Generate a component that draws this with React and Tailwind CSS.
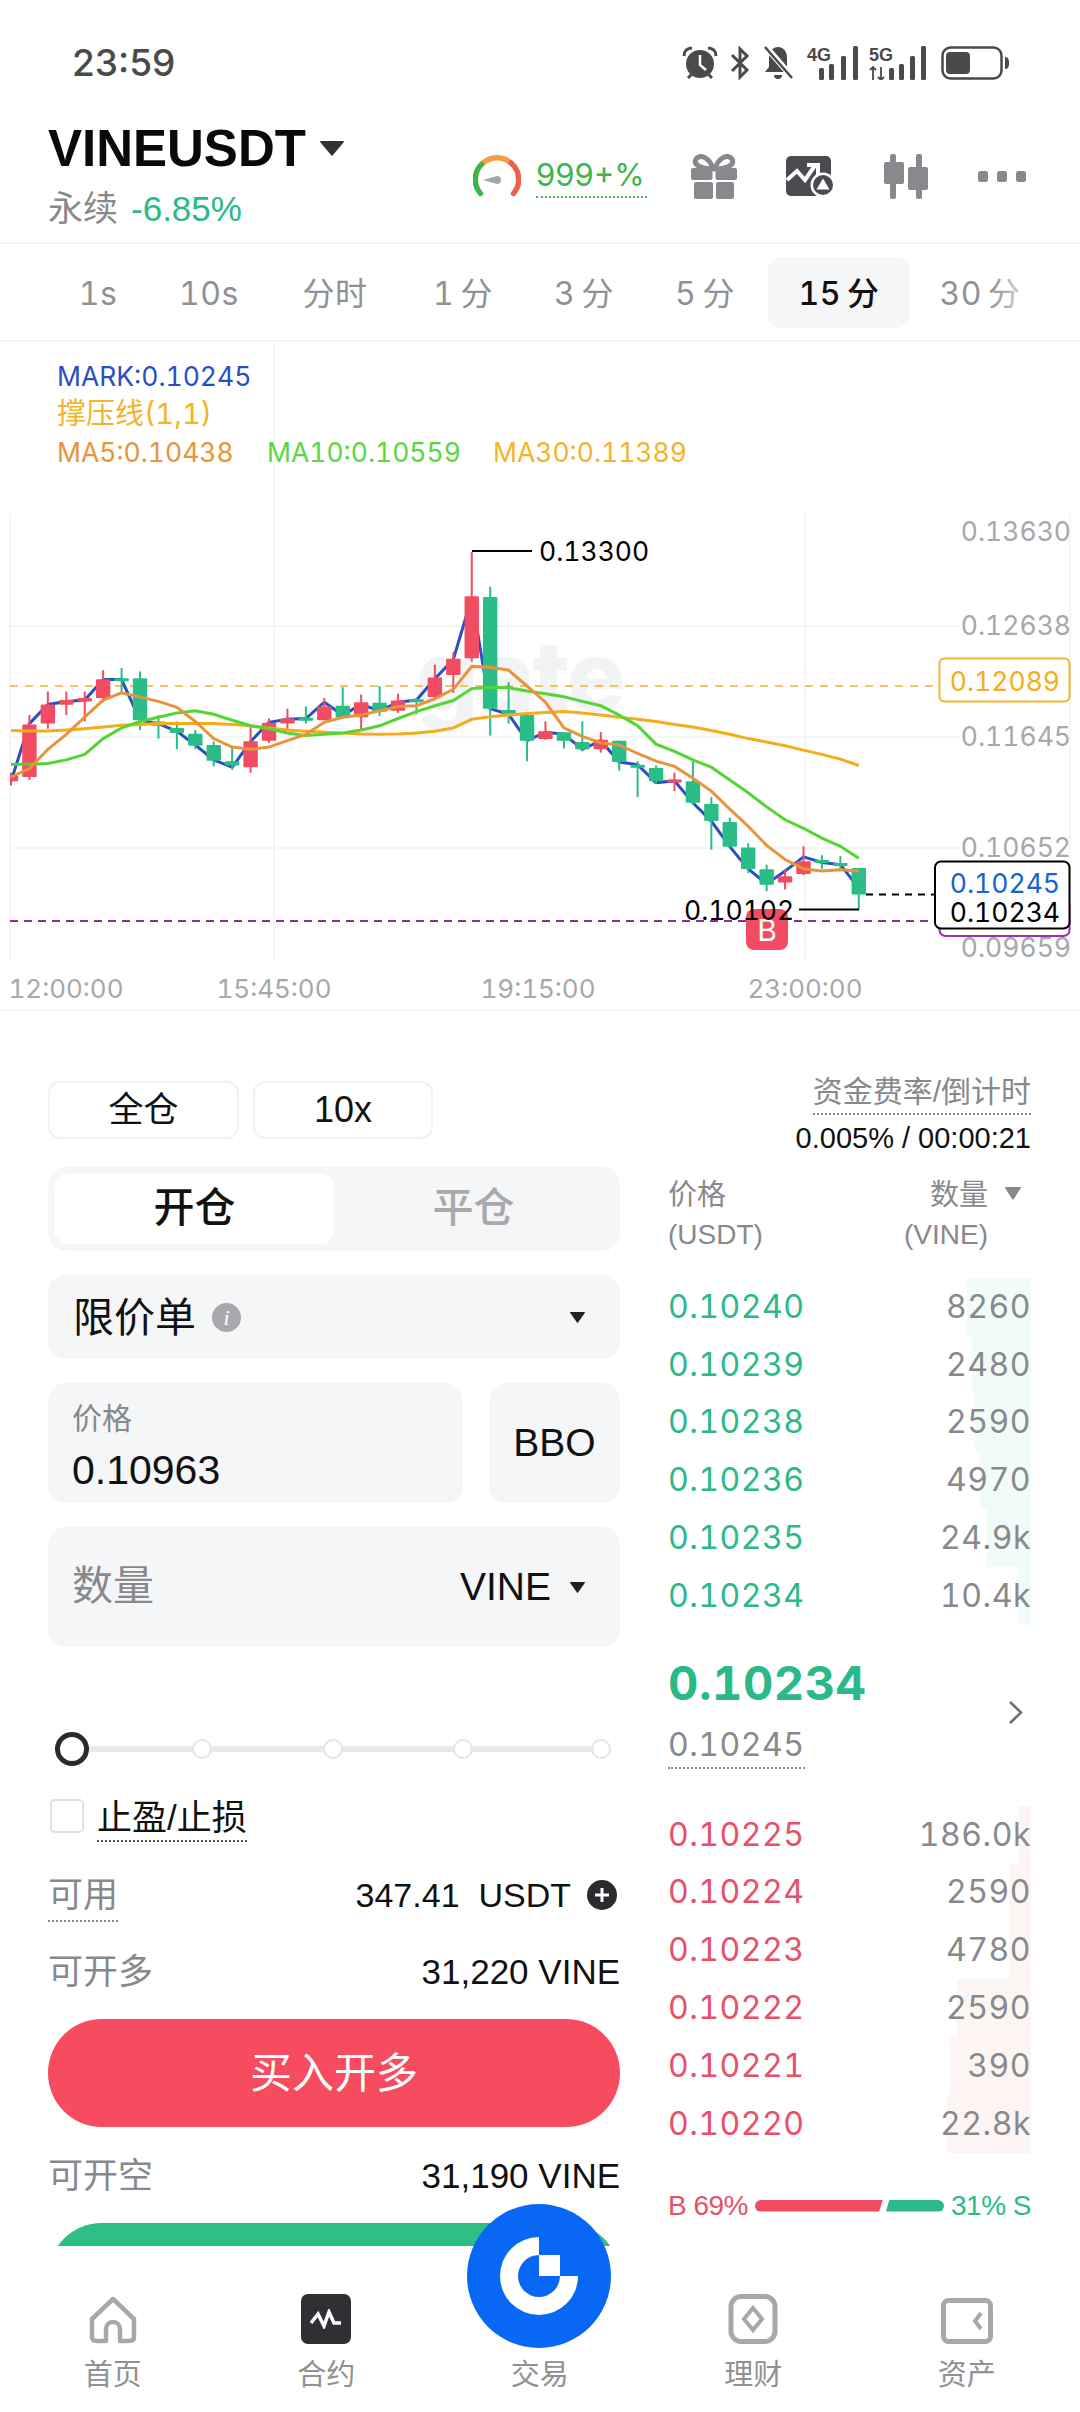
import React from "react";

// candle data in chart px-ish units: [wickTop, wickBottom, bodyTop, bodyBottom, up]
const candles = [
    [1015, 1045, 1022, 1035, 1], [880, 1032, 902, 1025, 1], [825, 912, 855, 900, 1], [825, 880, 845, 856, 1],
    [825, 895, 840, 848, 1], [775, 850, 796, 840, 1], [770, 830, 794, 800, 0], [778, 915, 794, 892, 0],
    [880, 935, 895, 905, 0], [895, 960, 910, 922, 0], [915, 960, 924, 952, 0], [942, 1000, 950, 987, 0],
    [955, 1008, 988, 998, 0], [908, 1015, 941, 1002, 1], [888, 945, 898, 940, 1], [865, 915, 888, 900, 1],
    [860, 900, 886, 890, 0], [840, 892, 860, 892, 1], [815, 888, 858, 885, 0], [832, 915, 850, 885, 1],
    [812, 882, 851, 872, 0], [830, 875, 846, 870, 1], [840, 878, 843, 846, 0], [762, 845, 792, 838, 1],
    [732, 828, 748, 786, 1], [498, 755, 602, 747, 1], [580, 928, 604, 865, 0], [803, 900, 868, 882, 0],
    [875, 988, 880, 940, 0], [895, 938, 918, 936, 1], [920, 958, 920, 940, 0], [895, 965, 943, 960, 0],
    [920, 968, 938, 960, 1], [940, 1010, 940, 990, 0], [988, 1072, 996, 1000, 0], [998, 1040, 1004, 1035, 0],
    [1015, 1058, 1031, 1036, 1], [988, 1090, 1035, 1085, 0], [1072, 1195, 1088, 1128, 0], [1120, 1190, 1130, 1188, 0],
    [1180, 1250, 1190, 1240, 0], [1230, 1292, 1241, 1277, 0], [1240, 1288, 1257, 1272, 1], [1187, 1255, 1222, 1252, 1],
    [1208, 1240, 1219, 1225, 0], [1210, 1240, 1226, 1230, 0], [1238, 1335, 1238, 1300, 0],
];

const markLine = [1035, 900, 855, 848, 845, 797, 797, 892, 900, 918, 950, 985, 1002, 942, 897, 890, 888, 850, 880, 855, 870, 850, 845, 795, 750, 605, 865, 878, 940, 920, 925, 960, 940, 990, 996, 1038, 1034, 1085, 1128, 1188, 1240, 1275, 1245, 1212, 1225, 1230, 1285];
const ma5Line = [1025, 1005, 960, 925, 885, 845, 828, 838, 848, 862, 895, 935, 955, 960, 955, 940, 925, 897, 885, 880, 870, 860, 858, 842, 820, 766, 768, 775, 812, 850, 910, 930, 945, 950, 970, 988, 1000, 1028, 1058, 1100, 1140, 1185, 1218, 1240, 1245, 1242, 1245];
const ma10Line = [995, 995, 993, 985, 972, 935, 910, 895, 885, 875, 870, 878, 892, 905, 912, 922, 928, 925, 922, 915, 905, 888, 872, 858, 846, 818, 815, 816, 824, 830, 837, 848, 858, 880, 905, 948, 965, 985, 1002, 1032, 1062, 1095, 1125, 1145, 1168, 1187, 1215];
const ma30Line = [916, 917, 917, 915, 912, 908, 904, 902, 900, 900, 900, 900, 902, 905, 910, 915, 918, 920, 922, 924, 925, 924, 922, 918, 910, 890, 884, 880, 876, 874, 872, 875, 880, 885, 890, 895, 902, 908, 916, 925, 935, 943, 952, 962, 972, 983, 998];

const candleX = (i) => 11 + 18.43 * i;
const toY = (v) => v / 2.34;
const linePoints = (vals) => vals.map((v, i) => `${candleX(i).toFixed(1)},${toY(v).toFixed(1)}`).join(" ");

const bids = [
    ["0.10240", "8260", 64], ["0.10239", "2480", 59], ["0.10238", "2590", 56],
    ["0.10236", "4970", 51], ["0.10235", "24.9k", 44], ["0.10234", "10.4k", 13],
];
const asks = [
    ["0.10225", "186.0k", 12], ["0.10224", "2590", 22], ["0.10223", "4780", 22],
    ["0.10222", "2590", 74], ["0.10221", "390", 81], ["0.10220", "22.8k", 84],
];

const periods = [
    ["1s", "w-[100px]"], ["10s", "w-[122px]"], ["分时", "w-[130px]"], ["1 分", "w-[126px]"],
    ["3 分", "w-[116px]"], ["5 分", "w-[126px]"],
];

const Tri = ({ w = 15, h = 11, className = "" }) => (
    <svg width={w} height={h} viewBox="0 0 15 11" preserveAspectRatio="none" className={className}>
        <path d="M0.5 0H14.5C15 0 15 0.5 14.8 1L8 10.5C7.7 11 7.3 11 7 10.5L0.2 1C0 0.5 0 0 0.5 0Z" fill="currentColor" />
    </svg>
);

const StatusIcons = () => (
    <div className="flex items-center text-[#4a4a4a]">
        <svg width="36" height="34" viewBox="0 0 36 34">
            <circle cx="18" cy="18" r="14" fill="currentColor" />
            <path d="M2 10C2 5 5 2 10 2M34 10C34 5 31 2 26 2M6 32l4-4M30 32l-4-4" stroke="currentColor" strokeWidth="3" fill="none" />
            <path d="M18 9v10l6 5" stroke="#fff" strokeWidth="2.5" fill="none" />
        </svg>
        <svg width="22" height="34" viewBox="0 0 22 34" className="ml-[11px]">
            <path d="M3 9L18 24L11 31V3L18 10L3 25" stroke="currentColor" strokeWidth="3" fill="none" />
        </svg>
        <svg width="34" height="36" viewBox="0 0 34 36" className="ml-[10px]">
            <path d="M17 2C11 2 8 7 8 13v9l-4 5h26l-4-5v-9C26 7 23 2 17 2Z" fill="currentColor" />
            <path d="M13 30a4 4 0 0 0 8 0Z" fill="currentColor" />
            <path d="M5 2L32 33" stroke="#fff" strokeWidth="6" />
            <path d="M4 2L31 33" stroke="currentColor" strokeWidth="2.5" />
        </svg>
        <svg width="53" height="34" viewBox="0 0 53 34" className="ml-[12px]">
            <text x="0" y="15" fontSize="18" fontWeight="700" fill="currentColor">4G</text>
            <rect x="12" y="22" width="5" height="12" rx="1.5" fill="currentColor" />
            <rect x="22" y="18" width="5" height="16" rx="1.5" fill="currentColor" />
            <rect x="34" y="10" width="5" height="24" rx="1.5" fill="currentColor" />
            <rect x="46" y="0" width="5" height="34" rx="1.5" fill="currentColor" />
        </svg>
        <svg width="59" height="34" viewBox="0 0 59 34" className="ml-[9px]">
            <text x="0" y="15" fontSize="18" fontWeight="700" fill="currentColor">5G</text>
            <path d="M4 34V21M1 24l3-3 3 3M12 21v13M9 31l3 3 3-3" stroke="currentColor" strokeWidth="1.8" fill="none" />
            <rect x="20" y="22" width="5" height="12" rx="1.5" fill="currentColor" />
            <rect x="30" y="18" width="5" height="16" rx="1.5" fill="currentColor" />
            <rect x="41" y="10" width="5" height="24" rx="1.5" fill="currentColor" />
            <rect x="52" y="0" width="5" height="34" rx="1.5" fill="currentColor" />
        </svg>
        <svg width="68" height="34" viewBox="0 0 68 34" className="ml-[13px]">
            <rect x="1.5" y="1.5" width="59" height="31" rx="8" stroke="currentColor" strokeWidth="2.5" fill="none" />
            <rect x="5" y="6" width="24" height="22" rx="4" fill="currentColor" />
            <path d="M64 11c3 0 4 2 4 6s-1 6-4 6Z" fill="currentColor" />
        </svg>
    </div>
);

const Gauge = () => (
    <svg width="48" height="42" viewBox="0 0 48 42">
        <path d="M7.5 38.5A21.5 21.5 0 0 1 10 8" stroke="#3db54a" strokeWidth="5.5" strokeLinecap="round" fill="none" />
        <path d="M10 8A21.5 21.5 0 0 1 38 8" stroke="#f59d45" strokeWidth="5.5" fill="none" />
        <path d="M38 8A21.5 21.5 0 0 1 40.5 38.5" stroke="#ee5f50" strokeWidth="5.5" strokeLinecap="round" fill="none" />
        <path d="M10 25L24 21a4 4 0 0 1 0 8Z" fill="#a3a5a8" />
    </svg>
);

const GiftIcon = () => (
    <svg width="46" height="45" viewBox="0 0 46 45" fill="#87898c">
        <path d="M22 15C19 4 9-1 5 5c-3 6 5 10 17 10ZM24 15C27 4 37-1 41 5c3 6-5 10-17 10Z" fill="none" stroke="#87898c" strokeWidth="5" />
        <rect x="0" y="14" width="21.5" height="12" rx="2" />
        <rect x="24.5" y="14" width="21.5" height="12" rx="2" />
        <rect x="3" y="28" width="19" height="17" rx="2" />
        <rect x="25" y="28" width="18" height="17" rx="2" />
    </svg>
);

const AlertIcon = () => (
    <svg width="49" height="41" viewBox="0 0 49 41">
        <rect x="0" y="0" width="45" height="40" rx="5" fill="#4a4b50" />
        <path d="M1 24L11 15L19 24L30 8" stroke="#fff" strokeWidth="4" fill="none" />
        <path d="M21 9H32V20" stroke="#fff" strokeWidth="4" fill="none" />
        <circle cx="37" cy="29" r="12.5" fill="#fff" />
        <circle cx="37" cy="29" r="10" fill="#4a4b50" />
        <path d="M37 22.5L43.5 33.5H30.5Z" fill="#fff" />
    </svg>
);

const CandleIcon = () => (
    <svg width="46" height="45" viewBox="0 0 46 45" fill="#87898c">
        <rect x="7" y="0" width="6" height="45" rx="2" />
        <rect x="1" y="8" width="20" height="22" rx="2" />
        <rect x="33" y="0" width="6" height="45" rx="2" />
        <rect x="25" y="13" width="20" height="23" rx="2" />
    </svg>
);

const DotsIcon = () => (
    <svg width="48" height="11" viewBox="0 0 48 11" fill="#87898c">
        <rect x="0" width="10" height="11" rx="2.5" />
        <rect x="19" width="10" height="11" rx="2.5" />
        <rect x="38" width="10" height="11" rx="2.5" />
    </svg>
);

const Chart = () => (
    <div className="relative h-[669px] border-b-2 border-[#f4f5f6] font-[Inter,'Noto_Sans_CJK_SC',sans-serif] tabular-nums">
        <svg width="1080" height="667" viewBox="0 0 1080 667" className="absolute left-0 top-[-3px]">
            <defs>
                <clipPath id="plot"><rect x="10" y="0" width="1000" height="640" /></clipPath>
            </defs>
            {/* grid */}
            <path d="M10 175V620M274 4V620M805 175V620M1070 175V620" stroke="#f4f4f5" strokeWidth="1.5" />
            <path d="M10 287H960M10 398H960M10 509H960" stroke="#f4f4f5" strokeWidth="1.5" />
            <text x="416" y="372" fontSize="98" fontWeight="800" letterSpacing="-2" fill="#f2f3f4">gate</text>
            <path d="M10 347H938" stroke="#f5b32b" strokeWidth="1.5" strokeDasharray="8 7" />
            <path d="M10 582H934" stroke="#8e2aa6" strokeWidth="2" strokeDasharray="8 6" />

            <g clipPath="url(#plot)">
                <polyline points={linePoints(markLine)} fill="none" stroke="#2a4fc0" strokeWidth="3" />
                {candles.map(([wt, wb, bt, bb, up], i) => {
                    const color = up ? "#f24c62" : "#2bbd87";
                    const x = candleX(i);
                    return (
                        <g key={i}>
                            <rect x={x - 1} y={toY(wt)} width="2" height={toY(wb) - toY(wt)} fill={color} />
                            <rect x={x - 7.2} y={toY(bt)} width="14.4" height={Math.max(toY(bb) - toY(bt), 3)} rx="1" fill={color} />
                        </g>
                    );
                })}
                <polyline points={linePoints(ma30Line)} fill="none" stroke="#f5ac1b" strokeWidth="3" />
                <polyline points={linePoints(ma10Line)} fill="none" stroke="#55d535" strokeWidth="3" />
                <polyline points={linePoints(ma5Line)} fill="none" stroke="#e8943a" strokeWidth="3" />
            </g>

            {/* high / low marks */}
            <path d="M472 212H532" stroke="#000" strokeWidth="2" />
            <text x="539" y="222" fontSize="26.5" fill="#000">0.13300</text>
            <rect x="746" y="570" width="42" height="41" rx="8" fill="#f24c62" />
            <text x="767" y="602" fontSize="30" fill="#fff" textAnchor="middle">B</text>
            <text x="684" y="581" fontSize="26.5" fill="#000">0.10102</text>
            <path d="M799 570.5H859" stroke="#000" strokeWidth="2" />
            <path d="M866 555.5H934" stroke="#000" strokeWidth="2" strokeDasharray="7 6" />

            {/* price axis */}
            <g fontSize="26.5" fill="#a7a8aa" textAnchor="end">
                <text x="1071" y="202">0.13630</text>
                <text x="1071" y="296">0.12638</text>
                <text x="1071" y="407">0.11645</text>
                <text x="1071" y="518">0.10652</text>
                <text x="1071" y="618">0.09659</text>
            </g>
            <rect x="939.5" y="319.5" width="130" height="43" rx="5" fill="#fff" stroke="#f3b32a" strokeWidth="2" />
            <text x="1060" y="352" fontSize="26.5" fill="#f3ae1b" textAnchor="end">0.12089</text>
            <rect x="939.5" y="560" width="130" height="37" rx="6" fill="#fff" stroke="#9c2fb0" strokeWidth="2" />
            <rect x="935" y="522.5" width="134.5" height="67" rx="6" fill="#fff" stroke="#000" strokeWidth="2" />
            <text x="1060" y="554" fontSize="26.5" fill="#1464d2" textAnchor="end">0.10245</text>
            <text x="1060" y="583" fontSize="26.5" fill="#000" textAnchor="end">0.10234</text>

            {/* time axis */}
            <g fontSize="26" fill="#a7a8aa" textAnchor="middle">
                <text x="66" y="659">12:00:00</text>
                <text x="274" y="659">15:45:00</text>
                <text x="538" y="659">19:15:00</text>
                <text x="805" y="659">23:00:00</text>
            </g>
        </svg>
        <div className="relative pl-[57px] pt-[15px] text-[26.5px] leading-[38px]">
            <div className="text-[#2a4fc0]">MARK:0.10245</div>
            <div className="text-[29px] text-[#f3b32a]">撑压线(1,1)</div>
            <div className="flex">
                <span className="w-[210px] text-[#e8943a]">MA5:0.10438</span>
                <span className="w-[226px] text-[#5cd63f]">MA10:0.10559</span>
                <span className="text-[#f5b32b]">MA30:0.11389</span>
            </div>
        </div>
    </div>
);

const BookRow = ({ row, up }) => (
    <div className="relative flex h-[57.8px] items-center justify-between font-[Inter] text-[32px] tracking-[0.5px] tabular-nums">
        <div
            className={up ? "absolute inset-y-0 right-0 bg-[#f1fbf7]" : "absolute inset-y-0 right-0 bg-[#fdf5f4]"}
            style={{ width: row[2] }}
        />
        <span className={up ? "relative text-[#2bb98a]" : "relative text-[#e8506a]"}>{row[0]}</span>
        <span className="relative text-[#87898c]">{row[1]}</span>
    </div>
);

const OrderForm = () => (
    <div className="flex h-[1235px] overflow-hidden">
        <div className="ml-[48px] w-[572px] pt-[70px]">
            <div className="flex gap-[14px] text-[#111]">
                <div className="flex h-[58px] w-[191px] items-center justify-center rounded-[12px] border-2 border-[#f1f2f3] text-[35px]">全仓</div>
                <div className="flex h-[58px] w-[180px] items-center justify-center rounded-[12px] border-2 border-[#f1f2f3] text-[36px]">10x</div>
            </div>
            <div className="mt-[28px] flex h-[84px] rounded-[18px] bg-[#f5f6f7] p-[7px] text-[41px] font-medium">
                <div className="flex w-[279px] items-center justify-center rounded-[14px] bg-white text-[#111]">开仓</div>
                <div className="flex flex-1 items-center justify-center text-[#a7a9ac]">平仓</div>
            </div>
            <div className="mt-[24px] flex h-[84px] items-center rounded-[18px] bg-[#f5f6f7] pl-[25px] pr-[35px] text-[#111]">
                <span className="pt-[3px] text-[41px]">限价单</span>
                <span className="ml-[16px] flex h-[29px] w-[29px] items-center justify-center rounded-full bg-[#a7a9ac] font-['Liberation_Serif'] text-[22px] italic text-white">i</span>
                <Tri className="ml-auto text-[#222]" />
            </div>
            <div className="mt-[24px] flex h-[120px] gap-[26px]">
                <div className="flex flex-1 flex-col rounded-[18px] bg-[#f5f6f7] pl-[24px] pt-[16px]">
                    <span className="text-[30px] leading-[40px] text-[#87898c]">价格</span>
                    <span className="mt-[11px] text-[41px] leading-[40px] text-[#111]">0.10963</span>
                </div>
                <div className="flex w-[131px] items-center justify-center rounded-[18px] bg-[#f5f6f7] text-[39px] text-[#111]">BBO</div>
            </div>
            <div className="mt-[24px] flex h-[120px] items-center rounded-[18px] bg-[#f5f6f7] pl-[24px] pr-[35px]">
                <span className="text-[41px] text-[#87898c]">数量</span>
                <span className="ml-auto text-[39px] text-[#111]">VINE</span>
                <Tri className="ml-[19px] text-[#222]" />
            </div>
            <div className="relative mt-[85px] flex h-[34px] items-center pl-[7px]">
                <div className="absolute inset-x-[24px] h-[6px] rounded-full bg-[#e8e9ea]" />
                <div className="relative h-[34px] w-[34px] rounded-full border-[5px] border-[#2a2b2e] bg-white" />
                <div className="relative ml-[103px] h-[20px] w-[20px] rounded-full border-2 border-[#e4e5e6] bg-white" />
                <div className="relative ml-[111px] h-[20px] w-[20px] rounded-full border-2 border-[#e4e5e6] bg-white" />
                <div className="relative ml-[110px] h-[20px] w-[20px] rounded-full border-2 border-[#e4e5e6] bg-white" />
                <div className="relative ml-[118px] h-[20px] w-[20px] rounded-full border-2 border-[#e4e5e6] bg-white" />
            </div>
            <div className="mt-[33px] flex h-[34px] items-center pl-[2px]">
                <div className="h-[34px] w-[34px] rounded-[5px] border-2 border-[#dfe0e2]" />
                <span className="ml-[13px] mt-[8px] h-[44px] border-b-2 border-dotted border-[#55575a] text-[35px] leading-[40px] text-[#111]">止盈/止损</span>
            </div>
            <div className="mt-[42px] flex h-[40px] items-center justify-between">
                <span className="mt-[7px] h-[47px] border-b-2 border-dotted border-[#87898c] text-[35px] leading-[40px] text-[#87898c]">可用</span>
                <div className="flex items-center text-[34px] text-[#111]">
                    <span className="whitespace-pre">347.41  USDT</span>
                    <span className="ml-[16px] mr-[3px] flex h-[30px] w-[30px] items-center justify-center rounded-full bg-[#2a2b2e]">
                        <svg width="16" height="16" viewBox="0 0 16 16"><path d="M8 1V15M1 8H15" stroke="#fff" strokeWidth="3" /></svg>
                    </span>
                </div>
            </div>
            <div className="mt-[37px] flex h-[40px] items-center justify-between">
                <span className="text-[35px] text-[#87898c]">可开多</span>
                <span className="text-[35px] text-[#111]">31,220 VINE</span>
            </div>
            <div className="mt-[27px] flex h-[108px] items-center justify-center rounded-full bg-[#f74b60] text-[42px] text-white">买入开多</div>
            <div className="mt-[29px] flex h-[40px] items-center justify-between">
                <span className="text-[35px] text-[#87898c]">可开空</span>
                <span className="text-[35px] text-[#111]">31,190 VINE</span>
            </div>
            <div className="mt-[27px] h-[108px] rounded-full bg-[#2ebd85]" />
        </div>

        <div className="relative ml-[48px] w-[363px] pt-[61px]">
            <div className="text-right">
                <span className="inline-block h-[43px] border-b-2 border-dotted border-[#87898c] text-[30px] leading-[40px] text-[#87898c]">资金费率/倒计时</span>
                <div className="mt-[3px] text-[29px] leading-[40px] text-[#111]">0.005% / 00:00:21</div>
            </div>
            <div className="mt-[17px] flex justify-between text-[29px] leading-[40px] text-[#87898c]">
                <div>
                    <div>价格</div>
                    <div className="text-[28px]">(USDT)</div>
                </div>
                <div className="flex flex-col items-end pr-[43px]">
                    <div>数量</div>
                    <div className="text-[28px]">(VINE)</div>
                </div>
                <Tri w={16} h={13} className="absolute right-[10px] mt-[12px] text-[#87898c]" />
            </div>
            <div className="mt-[23px]">
                {bids.map((row) => <BookRow key={row[0]} row={row} up />)}
            </div>
            <div className="mt-[28px] flex items-center justify-between pr-[8px]">
                <div>
                    <div className="font-[Inter] text-[47px] font-bold leading-[60px] tracking-[0.5px] tabular-nums text-[#2bb98a]">0.10234</div>
                    <span className="mt-[12px] inline-block h-[44px] border-b-2 border-dotted border-[#87898c] font-[Inter] text-[32px] leading-[40px] tracking-[0.5px] tabular-nums text-[#87898c]">0.10245</span>
                </div>
                <svg width="15" height="25" viewBox="0 0 15 25" className="mt-[4px]"><path d="M2 2L13 12.5L2 23" stroke="#6f7174" strokeWidth="2.6" fill="none" /></svg>
            </div>
            <div className="mt-[37px]">
                {asks.map((row) => <BookRow key={row[0]} row={row} />)}
            </div>
            <div className="mt-[33px] flex h-[40px] items-center justify-between text-[28px] tracking-[-0.5px]">
                <span className="text-[#e8506a]">B 69%</span>
                <div className="flex h-[12px] w-[189px] gap-[3px]">
                    <div className="h-full w-[128px] rounded-l-full bg-[#f24c62] [clip-path:polygon(0_0,100%_0,97%_100%,0_100%)]" />
                    <div className="h-full flex-1 rounded-r-full bg-[#2bb98a] [clip-path:polygon(6%_0,100%_0,100%_100%,0_100%)]" />
                </div>
                <span className="text-[#2bb98a]">31% S</span>
            </div>
        </div>
    </div>
);

const NavItem = ({ label, children }) => (
    <div className="flex w-[213.5px] flex-col items-center">
        <div className="flex h-[50px] items-end">{children}</div>
        <span className="mt-[11px] text-[29px] leading-[40px] text-[#8f9194]">{label}</span>
    </div>
);

const BottomNav = () => (
    <div className="relative flex h-[167px] bg-white pl-[6px] pt-[48px]">
        <NavItem label="首页">
            <svg width="48" height="48" viewBox="0 0 48 48" fill="none">
                <path d="M24 3L45 23V41C45 44 43 45 40 45H31V33C31 29 28 26 24 26C20 26 17 29 17 33V45H8C5 45 3 44 3 41V23Z" stroke="#a7a8aa" strokeWidth="4.5" strokeLinejoin="round" />
            </svg>
        </NavItem>
        <NavItem label="合约">
            <div className="flex h-[50px] w-[50px] items-center justify-center rounded-[7px] bg-[#2f3033]">
                <svg width="32" height="20" viewBox="0 0 32 20"><path d="M1 14L8 5L14 17L19 3L24 14H31" stroke="#fff" strokeWidth="3.5" fill="none" /></svg>
            </div>
        </NavItem>
        <NavItem label="交易"><div className="h-[50px]" /></NavItem>
        <NavItem label="理财">
            <svg width="50" height="50" viewBox="0 0 50 50" fill="none">
                <rect x="3" y="2.5" width="44" height="45" rx="10" stroke="#a7a8aa" strokeWidth="5" />
                <path d="M25 14L34 25L25 36L16 25Z" stroke="#a7a8aa" strokeWidth="4" />
            </svg>
        </NavItem>
        <NavItem label="资产">
            <svg width="52" height="46" viewBox="0 0 52 46" fill="none">
                <rect x="2.5" y="2.5" width="47" height="41" rx="5" stroke="#a7a8aa" strokeWidth="5" />
                <path d="M40 15L34 23L40 31" stroke="#a7a8aa" strokeWidth="4" />
            </svg>
        </NavItem>
        <div className="absolute left-[467px] top-[-42px] flex h-[144px] w-[144px] items-center justify-center rounded-full bg-[#0868f5]">
            <svg width="144" height="144" viewBox="0 0 144 144" fill="#fff">
                <path d="M72 33A39 39 0 1 0 111 72H93A21 21 0 1 1 72 51Z" />
                <rect x="72" y="51" width="21" height="21" />
            </svg>
        </div>
    </div>
);

export default function App() {
    return (
        <div className="h-[2412px] w-[1080px] overflow-hidden bg-white font-['Liberation_Sans','Noto_Sans_CJK_SC',sans-serif]">
            <div className="flex h-[110px] items-start justify-between pl-[72px] pr-[71px] pt-[45px]">
                <span className="font-[Inter] text-[37px] font-medium leading-[36px] text-[#4a4a4a]">23:59</span>
                <StatusIcons />
            </div>

            <div className="flex h-[134px] items-center justify-between border-b-2 border-[#f3f4f5] pl-[48px] pr-[54px]">
                <div>
                    <div className="flex items-center">
                        <span className="text-[51px] font-bold leading-[50px] text-[#0a0a0a]">VINEUSDT</span>
                        <Tri w={24} h={15} className="ml-[14px] text-[#333]" />
                    </div>
                    <div className="mt-[15px] flex items-center leading-[40px]">
                        <span className="text-[35px] text-[#87898c]">永续</span>
                        <span className="ml-[13px] text-[35px] text-[#2bb98a]">-6.85%</span>
                    </div>
                </div>
                <div className="flex items-center">
                    <Gauge />
                    <span className="ml-[15px] h-[44px] w-[111px] whitespace-nowrap border-b-2 border-dotted border-[#3db54a] font-[Inter] text-[31px] leading-[42px] text-[#3db54a]">999+%</span>
                    <div className="ml-[44px]"><GiftIcon /></div>
                    <div className="ml-[49px]"><AlertIcon /></div>
                    <div className="ml-[48px]"><CandleIcon /></div>
                    <div className="ml-[49px]"><DotsIcon /></div>
                </div>
            </div>

            <div className="relative flex h-[98px] items-center overflow-hidden border-b-2 border-[#f3f4f5] pl-[48px] font-[Inter,'Noto_Sans_CJK_SC',sans-serif] text-[32px] tracking-[0.5px] tabular-nums text-[#8f9194] [word-spacing:-3px]">
                {periods.map(([label, w]) => (
                    <div key={label} className={`${w} pt-[3px] text-center`}>{label}</div>
                ))}
                <div className="flex h-[71px] w-[142px] items-center justify-center rounded-[14px] bg-[#f5f6f7] pt-[3px] font-medium text-[#111]">15 分</div>
                <div className="w-[140px] pt-[3px] text-center">30 分</div>
                <div className="absolute inset-y-0 right-0 w-[90px] bg-gradient-to-r from-transparent to-white to-60%" />
            </div>

            <Chart />
            <OrderForm />
            <BottomNav />
        </div>
    );
}
